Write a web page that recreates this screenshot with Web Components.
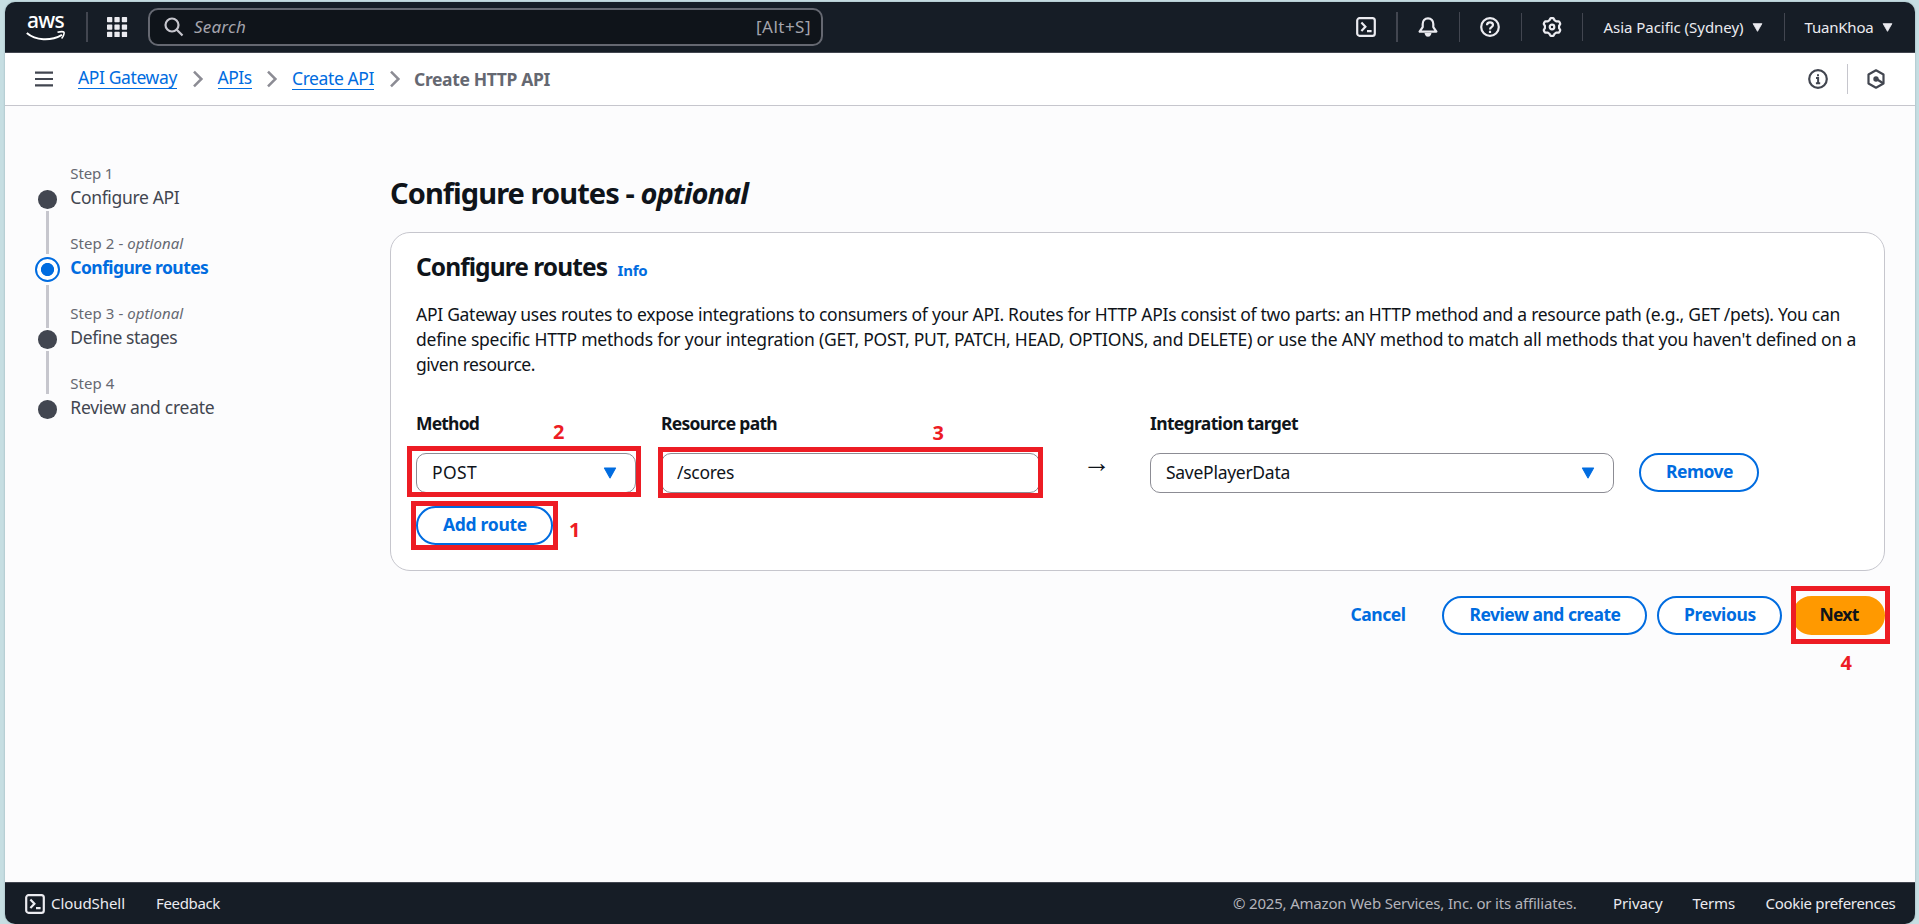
<!DOCTYPE html>
<html lang="en">
<head>
<meta charset="utf-8">
<title>API Gateway - Create HTTP API</title>
<style>
html, body { margin: 0; height: 100%; overflow: hidden; }
body { background: #c6dee2; font-family: "Noto Sans", "Open Sans", sans-serif; }
</style>
</head>
<body>
<aws-console></aws-console>
<script>
function define(name, css, html, setup) {
  const tpl = document.createElement('template');
  tpl.innerHTML = '<style>*{box-sizing:border-box}' + css + '</style>' + html;
  customElements.define(name, class extends HTMLElement {
    constructor() {
      super();
      this.attachShadow({ mode: 'open' }).appendChild(tpl.content.cloneNode(true));
    }
    connectedCallback() { if (setup) setup(this, this.shadowRoot); }
  });
}

/* Icons, on a 20px grid */
const gearPath = (() => {
  let d = '';
  for (let i = 0; i <= 72; i++) {
    const a = i * Math.PI / 36, r = 8 + 0.95 * Math.tanh(2.2 * Math.cos(6 * a));
    d += (i ? 'L' : 'M') + (10 + r * Math.sin(a)).toFixed(2) + ' ' + (10 - r * Math.cos(a)).toFixed(2);
  }
  return d + 'Z';
})();
const ICONS = {
  shell: '<rect x="1.2" y="1.2" width="17.6" height="17.6" rx="2.4"/><path d="M5.4 5.6 9.4 9.8 5.4 14M11 14.2h4.6"/>',
  bell: '<path d="M10 1.3c-3.3 0-5.3 2.4-5.3 5.6v3.2L1.6 14.6h16.8l-3.1-4.5V6.900c0-3.200-2-5.600-5.300-5.600Z" stroke-linejoin="round"/><path d="M8 17.200c.4 1.300 1 1.500 2 1.500s1.600-.2 2-1.500Z" fill="currentColor"/>',
  help: '<circle cx="10" cy="10" r="8.800"/><path d="M7 8.300C7 6.300 8.300 5.300 10 5.300s3 1 3 2.700c0 2.200-3 2-3 4.400"/><path d="M10 13.700v2.200"/>',
  gear: '<path d="' + gearPath + '" stroke-linejoin="round"/><circle cx="10" cy="10" r="2.300"/>',
  info: '<circle cx="10" cy="10" r="8.800"/><path d="M8 8.900h2.100v5.300M7.900 14.300h4.300M10 5.200v2.100" stroke-width="2"/>',
  hex: '<path d="M10 1.300 17.500 5.500V14.500L10 18.700 2.500 14.500V5.500Z" stroke-linejoin="round"/><circle cx="10" cy="10" r="2.700" fill="currentColor" stroke="none"/><path d="M10.500 10 17.500 14.500"/>',
  search: '<circle cx="8" cy="8" r="6.500"/><path d="M12.800 12.800 18.500 18.500"/>',
  apps: '<g fill="currentColor" stroke="none">' + [0, 7.400, 14.800].map(y => [0, 7.400, 14.800].map(x => `<rect x="${x}" y="${y}" width="5.300" height="5.300" rx=".7"/>`).join('')).join('') + '</g>',
  menu: '<path d="M1 3.600h18M1 10h18M1 16.400h18" stroke-width="2.200"/>',
  chevron: '<path d="M6 2.600 13.400 10 6 17.400" stroke-width="2.500"/>',
  caret: '<path d="M2 3h16L10 17Z" fill="currentColor" stroke-width="1.500" stroke-linejoin="round"/>',
  smile: '<path d="M0.800 2C9.500 9.600 24.500 10.400 36 3.800" stroke-width="2"/><path d="M31.500 1.200C34 .5 37.500.5 38 1.200S37.400 5.600 35.600 7.500" stroke-width="1.600"/>'
};
define('ui-icon',
  ':host{display:block;flex:none;width:20px;height:20px}svg{display:block;width:100%;height:100%;overflow:visible;fill:none;stroke:currentColor;stroke-width:2.2}',
  '<svg viewBox="0 0 20 20"></svg>',
  (el, root) => {
    const svg = root.querySelector('svg');
    if (el.hasAttribute('box')) svg.setAttribute('viewBox', el.getAttribute('box'));
    svg.innerHTML = ICONS[el.getAttribute('name')];
  });

define('v-rule', ':host{display:block;flex:none;width:1px;height:28px;background:#424650}', '');

define('callout-box',
  ':host{display:block;position:absolute;border:5px solid #ed1c24;z-index:2}' +
  'div{position:absolute;left:var(--nx);top:var(--ny);font-size:20px;line-height:24px;font-weight:700;color:#ed1c24}',
  '<div><slot></slot></div>');

define('ui-button',
  ':host{display:flex;align-items:center;justify-content:center;flex:none;position:relative;height:39px;border:2px solid #006ce0;border-radius:20px;color:#006ce0;background:#fff;font-size:17.5px;line-height:24px;font-weight:700;padding:0 0 3px 1px}' +
  ':host([plain]){border-color:transparent;background:none}' +
  ':host([primary]){border-color:#f90;background:#f90;color:#0f141a}',
  '<slot></slot>');

define('ui-field',
  ':host{display:block;position:relative;flex:none}' +
  '.label{height:25px;line-height:25px;font-weight:700;margin-bottom:17px}' +
  '.box{height:40px;border:1px solid #8c8c94;border-radius:10px;display:flex;align-items:center;justify-content:space-between;padding:0 18px 1px 15px;background:#fff}' +
  'ui-icon{color:#006ce0;width:14px;height:14px;margin-top:1px}:host([input]) ui-icon{display:none}',
  '<div class="label"><slot name="label"></slot></div><div class="box"><slot></slot><ui-icon name="caret"></ui-icon></div><slot name="mark"></slot>');

define('top-nav',
  ':host{display:flex;align-items:center;flex:none;height:51px;background:#161d26;border-bottom:1px solid #424650;color:#ebebf0;font-size:15px;line-height:20px}' +
  '.logo{width:39px;height:30px;margin-left:21px;color:#fff}.logo .t{height:16px;line-height:16px;font-size:21px;font-weight:500;padding-left:1px;margin-bottom:3px}.logo ui-icon{width:39px;height:9px}' +
  '.search{display:flex;align-items:center;width:675px;height:38px;margin-left:21px;border:2px solid #656871;border-radius:10px;background:#0f141a;padding:0 10px 0 14px;color:#a4a4ad;font-size:17px}' +
  '.search ui-icon{color:#c6c6cd}.search i{margin-left:10px;flex:1}' +
  '.caret{width:11px;height:11px;margin-left:8px}',
  `<div class="logo"><div class="t"><fit-text w="37">aws</fit-text></div><ui-icon name="smile" box="0 0 39 9"></ui-icon></div>
  <v-rule style="width:2px;height:30px;margin-left:21px"></v-rule>
  <ui-icon name="apps" style="margin-left:19px"></ui-icon>
  <div class="search"><ui-icon name="search"></ui-icon><i><fit-text w="52">Search</fit-text></i><fit-text w="55">[Alt+S]</fit-text></div>
  <ui-icon name="shell" style="margin-left:533px"></ui-icon><v-rule style="width:2px;height:30px;margin-left:20px"></v-rule>
  <ui-icon name="bell" style="margin-left:20px"></ui-icon><v-rule style="height:30px;margin-left:21px"></v-rule>
  <ui-icon name="help" style="margin-left:20px"></ui-icon><v-rule style="margin-left:20.500px"></v-rule>
  <ui-icon name="gear" style="margin-left:20.500px"></ui-icon><v-rule style="margin-left:20px"></v-rule>
  <fit-text w="140" style="margin-left:20.500px">Asia Pacific (Sydney)</fit-text><ui-icon class="caret" name="caret"></ui-icon>
  <v-rule style="margin-left:21px"></v-rule>
  <fit-text w="69" style="margin-left:20px">TuanKhoa</fit-text><ui-icon class="caret" name="caret"></ui-icon>`);

define('crumb-bar',
  ':host{display:flex;align-items:center;flex:none;height:53px;background:#fff;border-bottom:1px solid #c6c6cd;color:#424650;font-size:17.5px;line-height:24px;padding-right:30px}' +
  'a{color:#006ce0;border-bottom:1px solid #006ce0;height:22px;line-height:20px;margin-top:-1px}a.up{margin-top:-3px}' +
  '.c{color:#8c8c94;margin:0 14px 0 10.500px}.now{color:#656871;font-weight:700}.sp{flex:1}',
  `<ui-icon name="menu" style="margin-left:29px"></ui-icon>
  <a class="up" style="margin-left:24px"><fit-text w="99">API Gateway</fit-text></a><ui-icon class="c" name="chevron"></ui-icon>
  <a class="up" style="margin-left:-4px"><fit-text w="34">APIs</fit-text></a><ui-icon class="c" name="chevron"></ui-icon>
  <a style="margin-left:-4px"><fit-text w="82">Create API</fit-text></a><ui-icon class="c" name="chevron"></ui-icon>
  <fit-text class="now" w="136" style="margin-left:-4.500px;margin-top:-1px">Create HTTP API</fit-text>
  <div class="sp"></div><ui-icon name="info"></ui-icon>
  <v-rule style="height:30px;background:#c6c6cd;margin:0 18px 0 19px"></v-rule><ui-icon name="hex" style="margin-right:-1px"></ui-icon>`);

define('step-item',
  ':host{display:grid;grid-template-columns:25px 1fr;column-gap:10.500px;height:70px;color:#424650}' +
  '.rail{display:flex;flex-direction:column;align-items:center;padding-top:26px;height:70px}' +
  '.dot{flex:none;width:18.600px;height:18.600px;border-radius:50%;background:#424650;margin:3px 0 2px}' +
  '.line{width:3px;height:43px;flex:none;background:#c6c6cd}' +
  ':host([active]) .dot{width:25px;height:25px;border:2.300px solid #006ce0;background:radial-gradient(circle,#006ce0 6.200px,#fff 6.900px);margin:0 0 3px}' +
  ':host([last]) .line{display:none}' +
  '.n{font-size:15px;line-height:20px;color:#656871;margin-top:2px}.t{font-size:17.500px;line-height:24px;margin-top:2px}' +
  ':host([active]) .t{color:#006ce0;font-weight:700}',
  '<div class="rail"><div class="dot"></div><div class="line"></div></div><div><div class="n"><slot name="n"></slot></div><div class="t"><slot></slot></div></div>');

define('step-nav', ':host{display:block;flex:none;width:385px;padding:55px 0 0 29.800px}',
  `<step-item><fit-text slot="n" w="43">Step 1</fit-text><fit-text w="109">Configure API</fit-text></step-item>
  <step-item active><fit-text slot="n" w="113">Step 2 - <i>optional</i></fit-text><fit-text w="138">Configure routes</fit-text></step-item>
  <step-item><fit-text slot="n" w="113">Step 3 - <i>optional</i></fit-text><fit-text w="107">Define stages</fit-text></step-item>
  <step-item last><fit-text slot="n" w="44">Step 4</fit-text><fit-text w="144">Review and create</fit-text></step-item>`);

define('routes-card',
  ':host{display:block;height:339px;border:1px solid #c6c6cd;border-radius:20px;background:#fff;padding:19px 25px 0}' +
  '.h{display:flex;align-items:baseline;height:30px;line-height:30px;font-size:24.500px;font-weight:700;gap:10.500px}.h .i{font-size:15px;color:#006ce0}' +
  '.p{margin-top:20px;line-height:25px}.p fit-text{display:block}' +
  '.row{display:flex;align-items:flex-end;margin-top:34px}' +
  '.arrow{display:flex;justify-content:center;width:17px;height:40px;font-size:28px;line-height:20px;margin:0 45px 0 48px;font-family:"Liberation Sans",sans-serif}',
  `<div class="h"><fit-text w="191">Configure routes</fit-text><fit-text class="i" w="30">Info</fit-text></div>
  <div class="p"><fit-text w="1424">API Gateway uses routes to expose integrations to consumers of your API. Routes for HTTP APIs consist of two parts: an HTTP method and a resource path (e.g., GET /pets). You can</fit-text>
  <fit-text w="1440">define specific HTTP methods for your integration (GET, POST, PUT, PATCH, HEAD, OPTIONS, and DELETE) or use the ANY method to match all methods that you haven't defined on a</fit-text>
  <fit-text w="119">given resource.</fit-text></div>
  <div class="row">
    <ui-field style="width:220px"><fit-text slot="label" w="63">Method</fit-text><fit-text w="45">POST</fit-text>
      <callout-box slot="mark" style="left:-9px;top:35px;width:234px;height:51px;--nx:141px;--ny:-31px">2</callout-box></ui-field>
    <ui-field input style="width:379px;margin-left:25px"><fit-text slot="label" w="116">Resource path</fit-text><fit-text w="57">/scores</fit-text>
      <callout-box slot="mark" style="left:-3px;top:36px;width:385px;height:51px;--nx:269.500px;--ny:-31px">3</callout-box></ui-field>
    <div class="arrow">→</div>
    <ui-field style="width:464px"><fit-text slot="label" w="148">Integration target</fit-text><fit-text w="124">SavePlayerData</fit-text></ui-field>
    <ui-button style="width:120px;margin:0 0 1px 25px"><fit-text w="67">Remove</fit-text></ui-button>
  </div>
  <ui-button style="width:137px;margin-top:13px"><fit-text w="84">Add route</fit-text>
    <callout-box style="left:-7px;top:-7px;width:147px;height:49px;--nx:153px;--ny:12px">1</callout-box></ui-button>`);

define('wizard-page',
  ':host{display:flex;flex:1;background:#fcfcfd;color:#0f141a;font-size:17.500px;line-height:25px}' +
  'main{width:1495px;padding-top:69px}.title{height:36px;line-height:36px;font-size:29px;font-weight:700;margin-bottom:21px}' +
  '.actions{display:flex;justify-content:flex-end;margin-top:25px}',
  `<step-nav></step-nav><main>
  <div class="title"><fit-text w="358">Configure routes - <i>optional</i></fit-text></div>
  <routes-card></routes-card>
  <div class="actions">
    <ui-button plain style="width:91px"><fit-text w="55">Cancel</fit-text></ui-button>
    <ui-button style="width:205px;margin-left:19px"><fit-text w="151">Review and create</fit-text></ui-button>
    <ui-button style="width:125px;margin-left:10px"><fit-text w="72">Previous</fit-text></ui-button>
    <ui-button primary style="width:93px;margin-left:10px"><fit-text w="39">Next</fit-text>
      <callout-box style="left:-3px;top:-12px;width:99px;height:58px;--nx:44.500px;--ny:60px">4</callout-box></ui-button>
  </div></main>`);

define('console-footer',
  ':host{display:flex;align-items:center;flex:none;height:42px;background:#161d26;border-top:1px solid #424650;color:#ebebf0;font-size:15px;line-height:20px;padding:0 19.500px 0 20px}.sp{flex:1}.c{color:#b4b4bb}fit-text{margin-top:-2px}',
  `<ui-icon name="shell"></ui-icon><fit-text w="74" style="margin-left:6px">CloudShell</fit-text><fit-text w="64" style="margin-left:31px">Feedback</fit-text>
  <div class="sp"></div><fit-text class="c" w="343.500">© 2025, Amazon Web Services, Inc. or its affiliates.</fit-text>
  <fit-text w="49.500" style="margin-left:36.500px">Privacy</fit-text><fit-text w="42.500" style="margin-left:30px">Terms</fit-text><fit-text w="130" style="margin-left:30.500px">Cookie preferences</fit-text>`);

define('aws-console',
  ':host{display:flex;flex-direction:column;width:1910px;height:922px;margin:2px 0 0 5px;border-radius:10px;overflow:hidden;position:relative;box-shadow:0 0 2px rgba(60,90,100,.4)}',
  '<top-nav></top-nav><crumb-bar></crumb-bar><wizard-page></wizard-page><console-footer></console-footer>');

/* One line of text tracked to a given advance width */
define('fit-text', ':host{display:inline-block;white-space:nowrap}span{display:inline-block;white-space:nowrap}', '<span><slot></slot></span>',
  (el, root) => {
    const w = parseFloat(el.getAttribute('w')), span = root.querySelector('span');
    el.style.width = w + 'px';
    const n = el.textContent.length;
    span.style.letterSpacing = ((w - span.getBoundingClientRect().width) / n).toFixed(4) + 'px';
  });
</script>
</body>
</html>
